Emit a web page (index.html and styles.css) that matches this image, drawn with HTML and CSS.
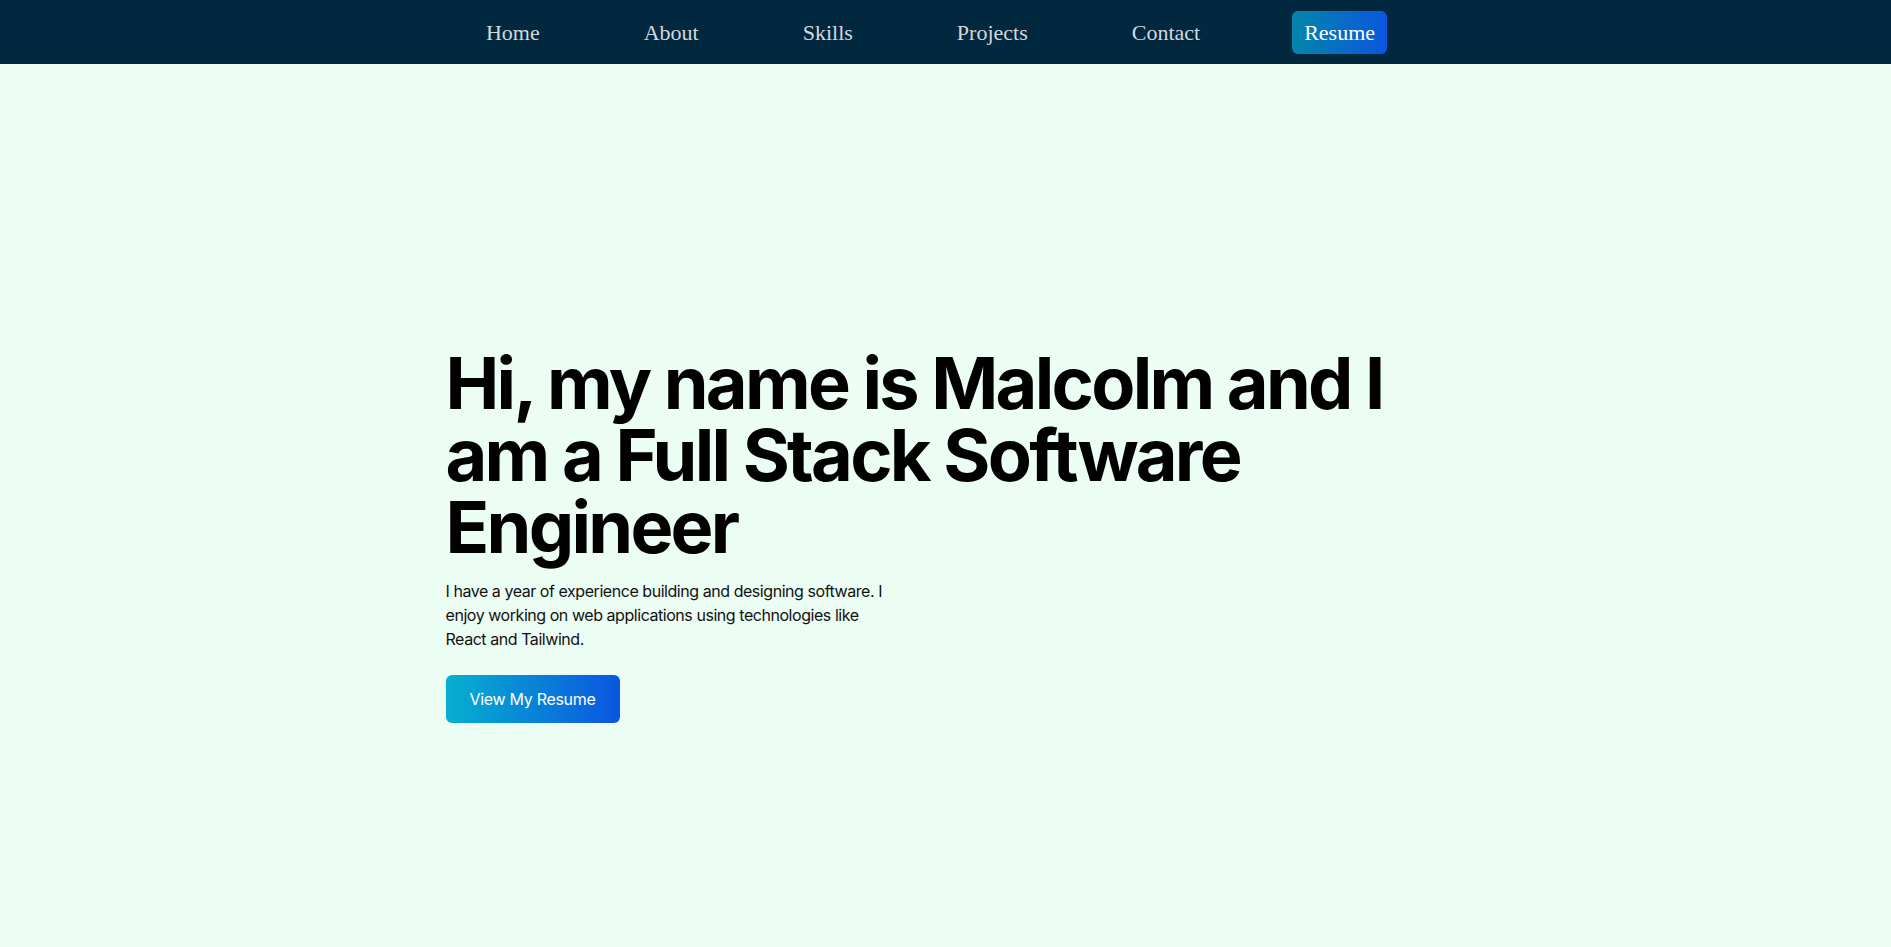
FILE: index.html
```html
<!DOCTYPE html>
<html lang="en">
<head>
<meta charset="utf-8">
<title>Malcolm — Full Stack Software Engineer</title>
<link rel="stylesheet" href="styles.css">
</head>
<body>
  <header class="navbar">
    <nav class="nav-list">
      <a class="nav-link" href="#home">Home</a>
      <a class="nav-link" href="#about">About</a>
      <a class="nav-link" href="#skills">Skills</a>
      <a class="nav-link" href="#projects">Projects</a>
      <a class="nav-link" href="#contact">Contact</a>
      <a class="nav-link nav-resume" href="#resume">Resume</a>
    </nav>
  </header>
  <main class="hero" id="home">
    <div class="hero-inner">
      <h1 class="hero-title">Hi, my name is Malcolm and I am a Full Stack Software Engineer</h1>
      <p class="hero-text">I have a year of experience building and designing software. I enjoy working on web applications using technologies like React and Tailwind.</p>
      <a class="hero-button" href="#resume">View My Resume</a>
    </div>
  </main>
</body>
</html>
```

FILE: styles.css
```css
* { box-sizing: border-box; }
html, body { margin: 0; padding: 0; height: 100%; overflow: hidden; }
body {
  background: #ecfdf3;
  font-family: Inter, "Noto Sans", sans-serif;
  color: #000;
}
.navbar {
  height: 64px;
  background: #01283f;
  display: flex;
  align-items: center;
  justify-content: center;
  padding-right: 30px;
}
.nav-list {
  display: flex;
  align-items: center;
  gap: 80px;
}
.nav-link {
  font-family: "Liberation Serif", "Times New Roman", serif;
  font-size: 22px;
  line-height: 25px;
  color: #d4d8de;
  text-decoration: none;
  padding: 9px 12px;
  border-radius: 6px;
}
.nav-resume {
  color: #fff;
  background: linear-gradient(to right, #0386a9, #0a56df);
}
.hero {
  padding-top: 283px;
}
.hero-inner {
  width: 1000px;
  margin: 0 auto;
}
.hero-title {
  margin: 0;
  font-size: 72px;
  line-height: 72px;
  font-weight: 700;
  letter-spacing: -2.7px;
}
.hero-text {
  margin: 16px 0 0;
  max-width: 448px;
  font-size: 16px;
  line-height: 24px;
  letter-spacing: -0.45px;
  color: #111;
}
.hero-button {
  display: inline-block;
  margin-top: 24px;
  padding: 12px 24px;
  font-size: 16px;
  line-height: 24px;
  letter-spacing: -0.3px;
  color: #fff;
  text-decoration: none;
  border-radius: 6px;
  background: linear-gradient(to right, #06b0cf, #0b56e0);
}
```
